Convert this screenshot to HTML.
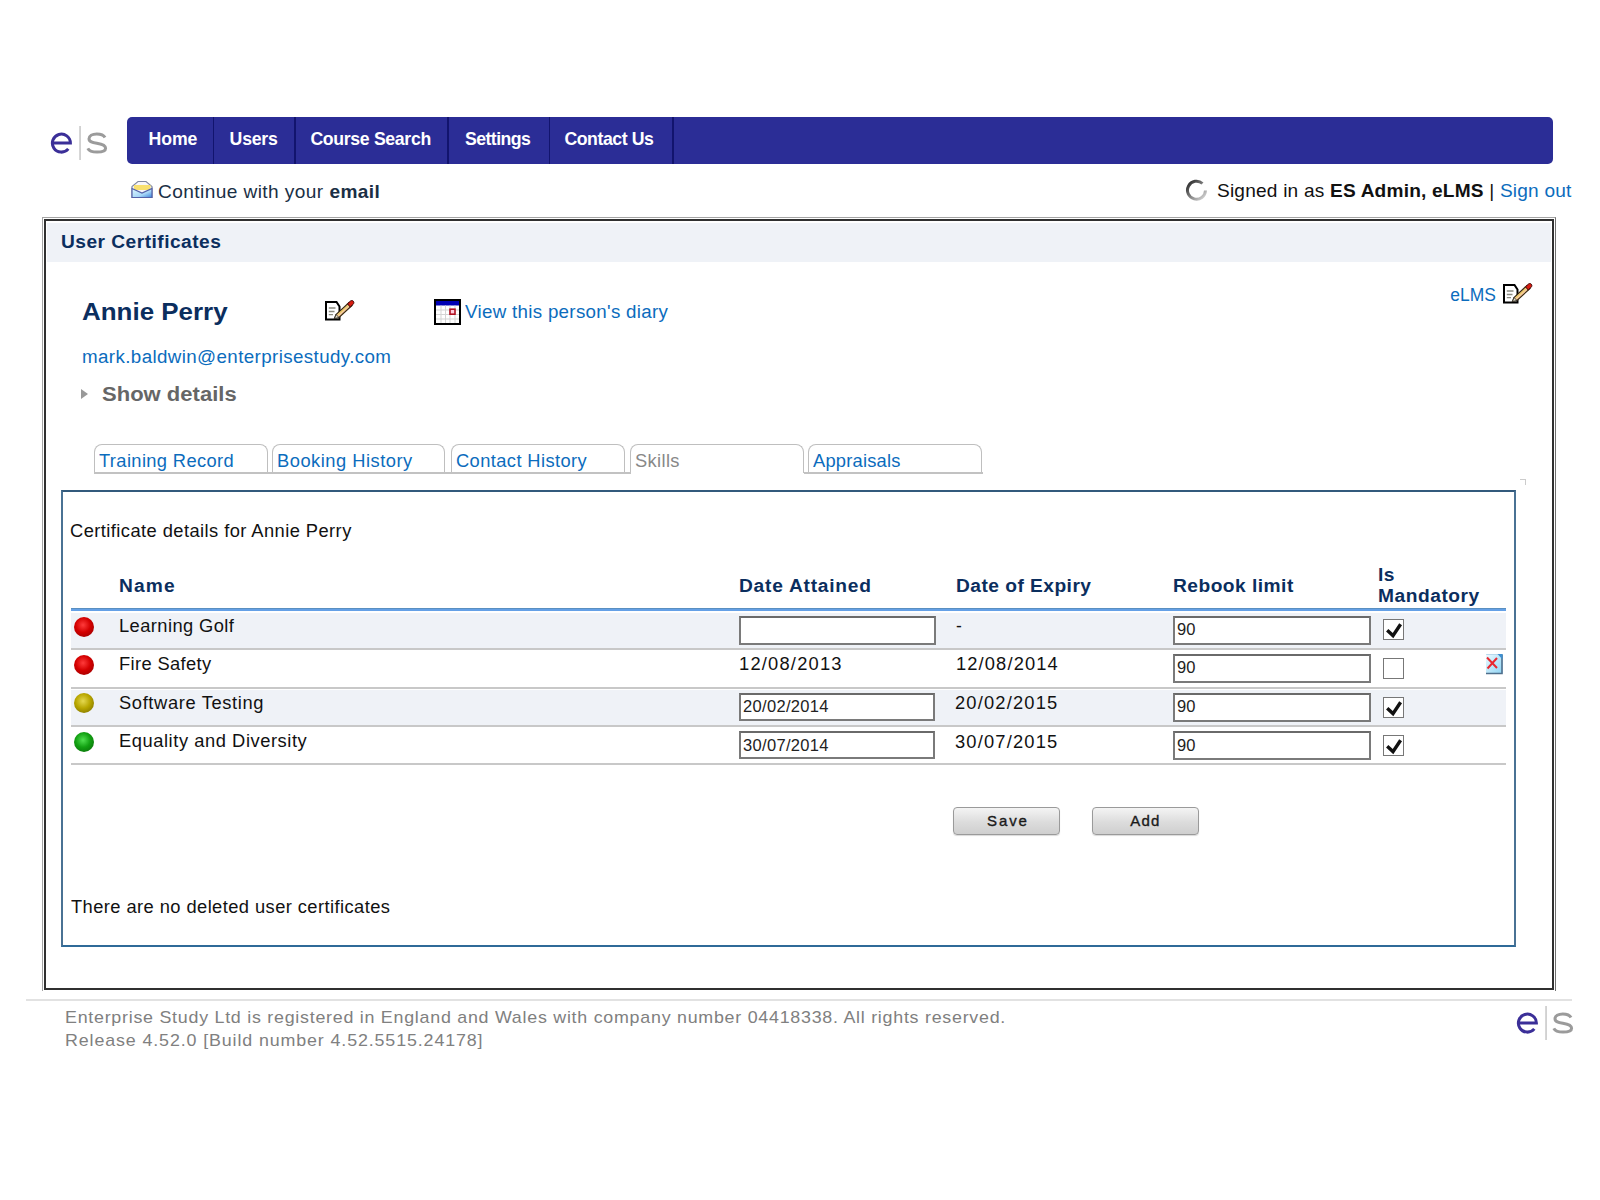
<!DOCTYPE html>
<html><head><meta charset="utf-8"><title>User Certificates</title><style>
*{margin:0;padding:0}
html,body{width:1600px;height:1200px;background:#fff;overflow:hidden;position:relative}
body{font-family:"Liberation Sans",sans-serif}
.t{position:absolute;white-space:nowrap}
.box{position:absolute}
.inp{box-sizing:border-box;border:2px solid #7a7a7a;border-top-color:#6a6a6a;background:#fff}
.cb{width:21px;height:21px;box-sizing:border-box;border:1.5px solid #777;background:#fff}
.btn{box-sizing:border-box;border:1px solid #9a9a9a;border-radius:4px;background:linear-gradient(#f4f4f4,#dcdcdc 55%,#cfcfcf);box-shadow:0 1px 1px rgba(0,0,0,.15)}
</style></head><body>
<svg class="box" style="left:50px;top:126px" width="64" height="40" viewBox="0 0 64 40"><path d="M2.4 17.1 H20.4 A9 9 0 1 0 18.3 22.9" fill="none" stroke="#3b2f98" stroke-width="3"/><rect x="29.3" y="0" width="1.5" height="34" fill="#c6c6c6"/><path d="M55 11.5 C53.7 9 50.5 7.9 46.8 7.9 C42.3 7.9 39 9.8 39 12.8 C39 16 42.5 16.6 46.8 17.3 C51.5 18 55.6 19 55.6 22.3 C55.6 25 52 26.1 47 26.1 C42.5 26.1 39 24.8 37.8 22.3" fill="none" stroke="#9b9b9b" stroke-width="3"/></svg><div class="box" style="left:127px;top:117px;width:1425.5px;height:46.5px;background:#2b2d96;border-radius:5px"></div><div class="box" style="left:212.5px;top:117px;width:1.5px;height:46.5px;background:#12146e"></div><div class="box" style="left:294px;top:117px;width:1.5px;height:46.5px;background:#12146e"></div><div class="box" style="left:447px;top:117px;width:1.5px;height:46.5px;background:#12146e"></div><div class="box" style="left:548.5px;top:117px;width:1.5px;height:46.5px;background:#12146e"></div><div class="box" style="left:672px;top:117px;width:1.5px;height:46.5px;background:#12146e"></div><div class="t" style="left:148.60px;top:131.01px;font-size:17.7px;line-height:17.7px;letter-spacing:-0.102px;color:#fff;font-weight:bold;">Home</div>
<div class="t" style="left:229.60px;top:131.01px;font-size:17.7px;line-height:17.7px;letter-spacing:-0.233px;color:#fff;font-weight:bold;">Users</div>
<div class="t" style="left:310.40px;top:131.01px;font-size:17.7px;line-height:17.7px;letter-spacing:-0.337px;color:#fff;font-weight:bold;">Course Search</div>
<div class="t" style="left:465.00px;top:131.01px;font-size:17.7px;line-height:17.7px;letter-spacing:-0.562px;color:#fff;font-weight:bold;">Settings</div>
<div class="t" style="left:564.40px;top:131.01px;font-size:17.7px;line-height:17.7px;letter-spacing:-0.436px;color:#fff;font-weight:bold;">Contact Us</div>
<svg class="box" style="left:131px;top:180px" width="23" height="19" viewBox="0 0 23 19"><defs><linearGradient id="eg" x1="0" y1="0" x2="1" y2="1"><stop offset="0" stop-color="#dff8ff"/><stop offset="0.6" stop-color="#a8d8f8"/><stop offset="1" stop-color="#3a80d8"/></linearGradient></defs><path d="M7 1.5 H15 L21 6.5 V17.5 H1 V6.5 Z" fill="#f6f6fa" stroke="#8088a0" stroke-width="1.1"/><rect x="3" y="5" width="16.5" height="5" fill="#f8e070"/><path d="M1 8.5 L11 13 L21 8.5 V17.5 H1 Z" fill="url(#eg)" stroke="#5462a8" stroke-width="1.2"/></svg><div class="t" style="left:158.00px;top:182.69px;font-size:18.2px;line-height:18.2px;letter-spacing:0.396px;color:#1a2f45;transform:scaleX(1.05);transform-origin:0 0;">Continue with your <b>email</b></div>
<svg class="box" style="left:1185px;top:178.5px" width="23" height="23" viewBox="0 0 23 23"><defs><linearGradient id="sg" x1="0" y1="0" x2="1" y2="1"><stop offset="0" stop-color="#222"/><stop offset="1" stop-color="#ddd"/></linearGradient></defs><path d="M17.5 4.5 A9 9 0 1 0 20.5 11.5" fill="none" stroke="url(#sg)" stroke-width="3"/></svg><div class="t" style="left:1217.00px;top:181.89px;font-size:18.2px;line-height:18.2px;letter-spacing:0.187px;color:#111;transform:scaleX(1.05);transform-origin:0 0;">Signed in as <b>ES Admin, eLMS</b> | <span style="color:#0b6cbd">Sign out</span></div>
<div class="box" style="left:42px;top:217px;width:1514px;height:774px;box-sizing:border-box;border:1px solid #a4a4a4;border-right-color:#707070;border-bottom:none"></div><div class="box" style="left:44px;top:219px;width:1510px;height:771px;box-sizing:border-box;border:2px solid #303030"></div><div class="box" style="left:47px;top:223px;width:1503.5px;height:39px;background:#eff2f7"></div><div class="t" style="left:61.00px;top:233.83px;font-size:17.44px;line-height:17.44px;letter-spacing:0.421px;color:#0b2e5e;font-weight:bold;transform:scaleX(1.1);transform-origin:0 0;">User Certificates</div>
<div class="t" style="left:81.50px;top:300.82px;font-size:23.6px;line-height:23.6px;letter-spacing:-0.004px;color:#0b2e5e;font-weight:bold;transform:scaleX(1.1);transform-origin:0 0;">Annie Perry</div>
<div class="t" style="left:81.50px;top:348.66px;font-size:17.88px;line-height:17.88px;letter-spacing:0.369px;color:#0b6cbd;transform:scaleX(1.05);transform-origin:0 0;">mark.baldwin@enterprisestudy.com</div>
<div class="box" style="left:81px;top:388.5px;width:0;height:0;border-left:7px solid #999;border-top:5px solid transparent;border-bottom:5px solid transparent"></div><div class="t" style="left:101.50px;top:383.62px;font-size:20px;line-height:20px;letter-spacing:0.014px;color:#666;font-weight:bold;transform:scaleX(1.1);transform-origin:0 0;">Show details</div>
<svg class="box" style="left:324.5px;top:298.5px" width="30" height="22" viewBox="0 0 30 22"><path d="M1 3 H11.5 L14.5 7.5 V20.5 H1 Z" fill="#fff" stroke="#000" stroke-width="2"/><path d="M3.8 9 H10.5 M3.8 12.5 H9.5 M3.8 15.7 H8" stroke="#8a8a80" stroke-width="1.3"/><path d="M9.5 19.5 L11 15.5 L24 3.5 L27 6.5 L14 18.5 Z" fill="#f6c99a" stroke="#3a2a10" stroke-width="1.2"/><path d="M12.5 16 L25 4.8" stroke="#e8d050" stroke-width="1"/><path d="M22.5 4.8 L25.5 2 C26.8 1 28.6 1.8 28.8 3.2 C29 4.2 28.5 5 27.8 5.6 L25.2 8 Z" fill="#d81c10" stroke="#3a0505" stroke-width="1"/><path d="M9.5 19.5 L11 15.5 L14 18.5 Z" fill="#e8e0c8" stroke="#222" stroke-width="0.8"/></svg><svg class="box" style="left:1502.5px;top:282px" width="30" height="22" viewBox="0 0 30 22"><path d="M1 3 H11.5 L14.5 7.5 V20.5 H1 Z" fill="#fff" stroke="#000" stroke-width="2"/><path d="M3.8 9 H10.5 M3.8 12.5 H9.5 M3.8 15.7 H8" stroke="#8a8a80" stroke-width="1.3"/><path d="M9.5 19.5 L11 15.5 L24 3.5 L27 6.5 L14 18.5 Z" fill="#f6c99a" stroke="#3a2a10" stroke-width="1.2"/><path d="M12.5 16 L25 4.8" stroke="#e8d050" stroke-width="1"/><path d="M22.5 4.8 L25.5 2 C26.8 1 28.6 1.8 28.8 3.2 C29 4.2 28.5 5 27.8 5.6 L25.2 8 Z" fill="#d81c10" stroke="#3a0505" stroke-width="1"/><path d="M9.5 19.5 L11 15.5 L14 18.5 Z" fill="#e8e0c8" stroke="#222" stroke-width="0.8"/></svg><svg class="box" style="left:434px;top:299px" width="27" height="26" viewBox="0 0 27 26"><rect x="1" y="1" width="25" height="24" fill="#fff" stroke="#000" stroke-width="2"/><rect x="2" y="2" width="23" height="4.5" fill="#0000b4"/><rect x="6.5" y="6.5" width="1" height="17.5" fill="#d4d4d4"/><rect x="11" y="6.5" width="1" height="17.5" fill="#d4d4d4"/><rect x="15.5" y="6.5" width="1" height="17.5" fill="#d4d4d4"/><rect x="20.5" y="6.5" width="1" height="17.5" fill="#d4d4d4"/><rect x="2" y="10.5" width="23" height="1" fill="#d4d4d4"/><rect x="2" y="15" width="23" height="1" fill="#d4d4d4"/><rect x="2" y="19.5" width="23" height="1" fill="#d4d4d4"/><rect x="16" y="10.2" width="5" height="5" fill="#fcd" stroke="#b01020" stroke-width="1.6"/></svg><div class="t" style="left:465.40px;top:303.56px;font-size:17.88px;line-height:17.88px;letter-spacing:0.284px;color:#0b6cbd;transform:scaleX(1.05);transform-origin:0 0;">View this person's diary</div>
<div class="t" style="left:1450.30px;top:287.23px;font-size:17.44px;line-height:17.44px;letter-spacing:0.026px;color:#0b6cbd;">eLMS</div>
<div class="box" style="left:93.5px;top:444px;width:174.5px;height:29px;box-sizing:border-box;border:1.5px solid #bfbfbf;border-bottom:none;border-radius:8px 8px 0 0;background:#fff"></div><div class="t" style="left:98.50px;top:453.23px;font-size:17.44px;line-height:17.44px;letter-spacing:0.351px;color:#0b6cbd;transform:scaleX(1.05);transform-origin:0 0;">Training Record</div>
<div class="box" style="left:272px;top:444px;width:173px;height:29px;box-sizing:border-box;border:1.5px solid #bfbfbf;border-bottom:none;border-radius:8px 8px 0 0;background:#fff"></div><div class="t" style="left:277.00px;top:453.23px;font-size:17.44px;line-height:17.44px;letter-spacing:0.479px;color:#0b6cbd;transform:scaleX(1.05);transform-origin:0 0;">Booking History</div>
<div class="box" style="left:451px;top:444px;width:174px;height:29px;box-sizing:border-box;border:1.5px solid #bfbfbf;border-bottom:none;border-radius:8px 8px 0 0;background:#fff"></div><div class="t" style="left:456.00px;top:453.23px;font-size:17.44px;line-height:17.44px;letter-spacing:0.378px;color:#0b6cbd;transform:scaleX(1.05);transform-origin:0 0;">Contact History</div>
<div class="box" style="left:630px;top:444px;width:174px;height:29px;box-sizing:border-box;border:1.5px solid #bfbfbf;border-bottom:none;border-radius:8px 8px 0 0;background:#fff"></div><div class="t" style="left:635.00px;top:453.23px;font-size:17.44px;line-height:17.44px;letter-spacing:0.329px;color:#888;transform:scaleX(1.05);transform-origin:0 0;">Skills</div>
<div class="box" style="left:807.5px;top:444px;width:174.5px;height:29px;box-sizing:border-box;border:1.5px solid #bfbfbf;border-bottom:none;border-radius:8px 8px 0 0;background:#fff"></div><div class="t" style="left:812.50px;top:453.23px;font-size:17.44px;line-height:17.44px;letter-spacing:0.203px;color:#0b6cbd;transform:scaleX(1.05);transform-origin:0 0;">Appraisals</div>
<div class="box" style="left:93.5px;top:472px;width:537px;height:1.5px;background:#c2c2c2"></div><div class="box" style="left:803.5px;top:472px;width:179px;height:1.5px;background:#c2c2c2"></div><div class="box" style="left:61px;top:489.5px;width:1454.5px;height:457.5px;box-sizing:border-box;border:2px solid #4a7294;border-top-color:#335a7c;border-bottom-color:#2f6a98"></div><div class="t" style="left:70.40px;top:523.03px;font-size:17.44px;line-height:17.44px;letter-spacing:0.411px;color:#111;transform:scaleX(1.05);transform-origin:0 0;">Certificate details for Annie Perry</div>
<div class="t" style="left:119.00px;top:578.03px;font-size:17.44px;line-height:17.44px;letter-spacing:1.068px;color:#0b2e5e;font-weight:bold;transform:scaleX(1.1);transform-origin:0 0;">Name</div>
<div class="t" style="left:738.50px;top:578.03px;font-size:17.44px;line-height:17.44px;letter-spacing:0.677px;color:#0b2e5e;font-weight:bold;transform:scaleX(1.1);transform-origin:0 0;">Date Attained</div>
<div class="t" style="left:955.75px;top:578.03px;font-size:17.44px;line-height:17.44px;letter-spacing:0.422px;color:#0b2e5e;font-weight:bold;transform:scaleX(1.1);transform-origin:0 0;">Date of Expiry</div>
<div class="t" style="left:1173.30px;top:578.03px;font-size:17.44px;line-height:17.44px;letter-spacing:0.429px;color:#0b2e5e;font-weight:bold;transform:scaleX(1.1);transform-origin:0 0;">Rebook limit</div>
<div class="t" style="left:1377.50px;top:566.83px;font-size:17.44px;line-height:17.44px;letter-spacing:0.37px;color:#0b2e5e;font-weight:bold;transform:scaleX(1.1);transform-origin:0 0;">Is</div>
<div class="t" style="left:1377.50px;top:587.63px;font-size:17.44px;line-height:17.44px;letter-spacing:0.487px;color:#0b2e5e;font-weight:bold;transform:scaleX(1.1);transform-origin:0 0;">Mandatory</div>
<div class="box" style="left:71px;top:608px;width:1435px;height:3px;background:linear-gradient(#5a8fc0 0,#5a8fc0 33%,#64a0e6 34%)"></div><div class="box" style="left:71px;top:613px;width:1435px;height:35px;background:#eff2f7"></div><div class="box" style="left:71px;top:648px;width:1435px;height:2px;background:#c8c8c8"></div><div class="box" style="left:74px;top:616.5px;width:20px;height:20px;border-radius:50%;background:radial-gradient(circle at 45% 40%, #ff3b3b 0, #d40000 45%, #8a0000 100%)"></div><div class="box" style="left:71px;top:687px;width:1435px;height:2px;background:#c8c8c8"></div><div class="box" style="left:74px;top:654.5px;width:20px;height:20px;border-radius:50%;background:radial-gradient(circle at 45% 40%, #ff3b3b 0, #d40000 45%, #8a0000 100%)"></div><div class="box" style="left:71px;top:690px;width:1435px;height:35px;background:#eff2f7"></div><div class="box" style="left:71px;top:725px;width:1435px;height:2px;background:#c8c8c8"></div><div class="box" style="left:74px;top:693px;width:20px;height:20px;border-radius:50%;background:radial-gradient(circle at 45% 40%, #e4d850 0, #b8a600 45%, #6e6400 100%)"></div><div class="box" style="left:71px;top:763px;width:1435px;height:2px;background:#c8c8c8"></div><div class="box" style="left:74px;top:731.5px;width:20px;height:20px;border-radius:50%;background:radial-gradient(circle at 45% 40%, #50e050 0, #12a012 45%, #076007 100%)"></div><div class="t" style="left:119.00px;top:618.43px;font-size:17.44px;line-height:17.44px;letter-spacing:0.394px;color:#111;transform:scaleX(1.05);transform-origin:0 0;">Learning Golf</div>
<div class="t" style="left:119.00px;top:656.03px;font-size:17.44px;line-height:17.44px;letter-spacing:0.346px;color:#111;transform:scaleX(1.05);transform-origin:0 0;">Fire Safety</div>
<div class="t" style="left:119.00px;top:695.03px;font-size:17.44px;line-height:17.44px;letter-spacing:0.596px;color:#111;transform:scaleX(1.05);transform-origin:0 0;">Software Testing</div>
<div class="t" style="left:119.00px;top:733.03px;font-size:17.44px;line-height:17.44px;letter-spacing:0.531px;color:#111;transform:scaleX(1.05);transform-origin:0 0;">Equality and Diversity</div>
<div class="box inp" style="left:738.75px;top:615.5px;width:197px;height:29.5px"></div><div class="t" style="left:738.50px;top:656.03px;font-size:17.44px;line-height:17.44px;letter-spacing:1.153px;color:#111;transform:scaleX(1.05);transform-origin:0 0;">12/08/2013</div>
<div class="box inp" style="left:739px;top:692.5px;width:196px;height:28px"></div><div class="t" style="left:743.00px;top:698.23px;font-size:16.5px;line-height:16.5px;letter-spacing:0.32px;color:#222;">20/02/2014</div>
<div class="box inp" style="left:739px;top:731px;width:196px;height:28px"></div><div class="t" style="left:743.00px;top:736.73px;font-size:16.5px;line-height:16.5px;letter-spacing:0.32px;color:#222;">30/07/2014</div>
<div class="t" style="left:956.00px;top:618.03px;font-size:17.44px;line-height:17.44px;letter-spacing:0px;color:#111;">-</div>
<div class="t" style="left:955.75px;top:656.03px;font-size:17.44px;line-height:17.44px;letter-spacing:1.068px;color:#111;transform:scaleX(1.05);transform-origin:0 0;">12/08/2014</div>
<div class="t" style="left:955.25px;top:694.78px;font-size:17.44px;line-height:17.44px;letter-spacing:1.121px;color:#111;transform:scaleX(1.05);transform-origin:0 0;">20/02/2015</div>
<div class="t" style="left:955.25px;top:733.53px;font-size:17.44px;line-height:17.44px;letter-spacing:1.121px;color:#111;transform:scaleX(1.05);transform-origin:0 0;">30/07/2015</div>
<div class="box inp" style="left:1173px;top:615.5px;width:198px;height:29px"></div><div class="t" style="left:1177.00px;top:621.23px;font-size:16.5px;line-height:16.5px;letter-spacing:0.1px;color:#222;">90</div>
<div class="box inp" style="left:1173px;top:653.7px;width:198px;height:29px"></div><div class="t" style="left:1177.00px;top:659.43px;font-size:16.5px;line-height:16.5px;letter-spacing:0.1px;color:#222;">90</div>
<div class="box inp" style="left:1173px;top:692.5px;width:198px;height:29px"></div><div class="t" style="left:1177.00px;top:698.23px;font-size:16.5px;line-height:16.5px;letter-spacing:0.1px;color:#222;">90</div>
<div class="box inp" style="left:1173px;top:731px;width:198px;height:29px"></div><div class="t" style="left:1177.00px;top:736.73px;font-size:16.5px;line-height:16.5px;letter-spacing:0.1px;color:#222;">90</div>
<div class="box cb" style="left:1383px;top:619.3px"></div><svg class="box" style="left:1385px;top:621.3px" width="18" height="18" viewBox="0 0 18 18"><path d="M2.2 9.3 L8 14.6 L15.6 3.2" fill="none" stroke="#111" stroke-width="3.4"/></svg><div class="box cb" style="left:1383px;top:658px"></div><div class="box cb" style="left:1383px;top:696.5px"></div><svg class="box" style="left:1385px;top:698.5px" width="18" height="18" viewBox="0 0 18 18"><path d="M2.2 9.3 L8 14.6 L15.6 3.2" fill="none" stroke="#111" stroke-width="3.4"/></svg><div class="box cb" style="left:1383px;top:735px"></div><svg class="box" style="left:1385px;top:737px" width="18" height="18" viewBox="0 0 18 18"><path d="M2.2 9.3 L8 14.6 L15.6 3.2" fill="none" stroke="#111" stroke-width="3.4"/></svg><svg class="box" style="left:1485px;top:653px" width="19" height="22" viewBox="0 0 19 22"><defs><linearGradient id="dg" x1="0" y1="0" x2="1" y2="1"><stop offset="0" stop-color="#eefaff"/><stop offset="1" stop-color="#8ed4f4"/></linearGradient></defs><path d="M1 1 H17.5 V20.5 H1 Z" fill="url(#dg)"/><path d="M17 1.5 V20.5 H1" fill="none" stroke="#4f6f8c" stroke-width="1.6"/><path d="M1.2 1.5 H13" stroke="#b8d8ec" stroke-width="1"/><path d="M12.5 1 H17.5 V6.5 Z" fill="#3f8fd0"/><path d="M2 4.5 L12 15 M12 5 L2.5 15.5" stroke="#e82830" stroke-width="2"/></svg><div class="box btn" style="left:953px;top:807px;width:107px;height:28px"></div><div class="t" style="left:987.00px;top:812.90px;font-size:15px;line-height:15px;letter-spacing:1.9px;color:#1a1a1a;-webkit-text-stroke:0.35px #1a1a1a;">Save</div>
<div class="box btn" style="left:1091.5px;top:807px;width:107px;height:28px"></div><div class="t" style="left:1130.20px;top:812.90px;font-size:15px;line-height:15px;letter-spacing:1.2px;color:#1a1a1a;-webkit-text-stroke:0.35px #1a1a1a;">Add</div>
<div class="t" style="left:70.75px;top:899.03px;font-size:17.44px;line-height:17.44px;letter-spacing:0.403px;color:#111;transform:scaleX(1.05);transform-origin:0 0;">There are no deleted user certificates</div>
<div class="box" style="left:1520px;top:479px;width:6px;height:6px;border-top:1.5px solid #ccc;border-right:1.5px solid #ccc;box-sizing:border-box"></div><div class="box" style="left:26px;top:999px;width:1546px;height:2px;background:#e2e2e2"></div><div class="t" style="left:65.30px;top:1008.61px;font-size:17px;line-height:17px;letter-spacing:0.705px;color:#808080;transform:scaleX(1.05);transform-origin:0 0;">Enterprise Study Ltd is registered in England and Wales with company number 04418338. All rights reserved.</div>
<div class="t" style="left:65.30px;top:1031.61px;font-size:17px;line-height:17px;letter-spacing:0.833px;color:#808080;transform:scaleX(1.05);transform-origin:0 0;">Release 4.52.0 [Build number 4.52.5515.24178]</div>
<svg class="box" style="left:1515.5px;top:1006px" width="64" height="40" viewBox="0 0 64 40"><path d="M2.4 17.1 H20.4 A9 9 0 1 0 18.3 22.9" fill="none" stroke="#3b2f98" stroke-width="3"/><rect x="29.3" y="0" width="1.5" height="34" fill="#c6c6c6"/><path d="M55 11.5 C53.7 9 50.5 7.9 46.8 7.9 C42.3 7.9 39 9.8 39 12.8 C39 16 42.5 16.6 46.8 17.3 C51.5 18 55.6 19 55.6 22.3 C55.6 25 52 26.1 47 26.1 C42.5 26.1 39 24.8 37.8 22.3" fill="none" stroke="#9b9b9b" stroke-width="3"/></svg></body></html>
